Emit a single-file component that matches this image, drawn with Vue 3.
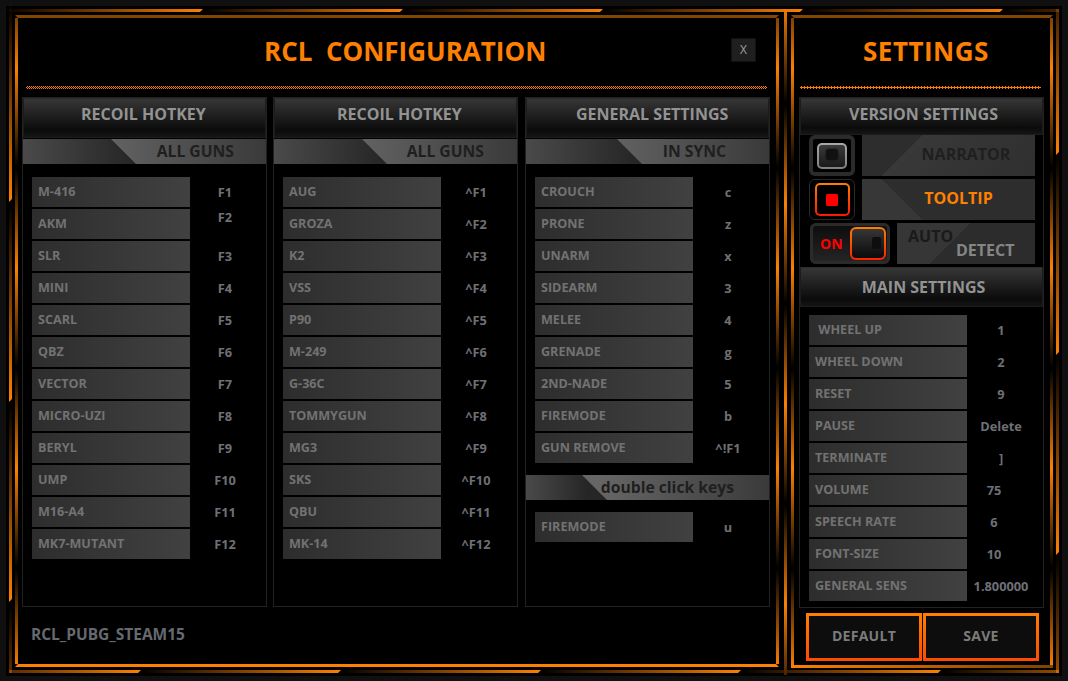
<script setup>
const columns = [
  {
    cls: 'c1', title: 'RECOIL HOTKEY', sub: 'ALL GUNS',
    rows: [['M-416','F1'],['AKM','F2','up'],['SLR','F3'],['MINI','F4'],['SCARL','F5'],['QBZ','F6'],['VECTOR','F7'],['MICRO-UZI','F8'],['BERYL','F9'],['UMP','F10'],['M16-A4','F11'],['MK7-MUTANT','F12']],
  },
  {
    cls: 'c2', title: 'RECOIL HOTKEY', sub: 'ALL GUNS',
    rows: [['AUG','^F1'],['GROZA','^F2'],['K2','^F3'],['VSS','^F4'],['P90','^F5'],['M-249','^F6'],['G-36C','^F7'],['TOMMYGUN','^F8'],['MG3','^F9'],['SKS','^F10'],['QBU','^F11'],['MK-14','^F12']],
  },
  {
    cls: 'c3', title: 'GENERAL SETTINGS', sub: 'IN SYNC',
    rows: [['CROUCH','c'],['PRONE','z'],['UNARM','x'],['SIDEARM','3'],['MELEE','4'],['GRENADE','g'],['2ND-NADE','5'],['FIREMODE','b'],['GUN REMOVE','^!F1']],
    extra: { sub: 'double click keys', rows: [['FIREMODE','u']] },
  },
]
const mainRows = [[' WHEEL UP','1'],['WHEEL DOWN','2'],['RESET','9'],['PAUSE','Delete'],['TERMINATE',']'],['VOLUME','75','left'],['SPEECH RATE','6','left'],['FONT-SIZE','10','left'],['GENERAL SENS','1.800000']]
const mainTitle = 'RCL\u00a0\u00a0CONFIGURATION'
const topSegs = 6
const leftSegs = 4
const bottomSegs = 6
const rightSegs = 4
</script>

<template>
  <div class="page">
    <div class="stage">
      <section class="frame main">
        <header class="head">
          <h1 class="title rcl">{{ mainTitle }}</h1>
          <button class="close">X</button>
        </header>
        <div class="dots"></div>
        <div class="cols">
          <div v-for="col in columns" :key="col.cls + col.title" class="panel" :class="col.cls">
            <div class="bar">{{ col.title }}</div>
            <div class="sub"><span>{{ col.sub }}</span></div>
            <div class="rows">
              <div v-for="r in col.rows" :key="r[0]" class="row">
                <div class="label">{{ r[0] }}</div>
                <div class="val" :class="r[2]">{{ r[1] }}</div>
              </div>
            </div>
            <template v-if="col.extra">
              <div class="sub dbl"><span>{{ col.extra.sub }}</span></div>
              <div class="rows tight">
                <div v-for="r in col.extra.rows" :key="r[0]" class="row">
                  <div class="label">{{ r[0] }}</div>
                  <div class="val">{{ r[1] }}</div>
                </div>
              </div>
            </template>
          </div>
        </div>
        <div class="foot">RCL_PUBG_STEAM15</div>
      </section>

      <section class="frame side">
        <i class="edge"></i>
        <header class="head">
          <h1 class="title set">SETTINGS</h1>
        </header>
        <div class="dots sparse"></div>
        <div class="panel sp">
          <div class="bar short">VERSION SETTINGS</div>
          <div class="opt">
            <div class="chk off"><span class="box"><b></b></span></div>
            <div class="blk narrator">NARRATOR</div>
          </div>
          <div class="opt">
            <div class="chk on"><span class="box"><b></b></span></div>
            <div class="blk tooltip">TOOLTIP</div>
          </div>
          <div class="opt">
            <div class="toggle">
              <span class="on-txt">ON</span>
              <span class="knob"><b></b></span>
            </div>
            <div class="blk auto">
              <span class="a1">AUTO</span>
              <span class="a2">DETECT</span>
            </div>
          </div>
          <div class="bar short mainbar">MAIN SETTINGS</div>
          <div class="rows srows">
            <div v-for="r in mainRows" :key="r[0]" class="row">
              <div class="label">{{ r[0] }}</div>
              <div class="val sval" :class="r[2]">{{ r[1] }}</div>
            </div>
          </div>
        </div>
        <div class="btns">
          <button class="btn">DEFAULT</button>
          <button class="btn">SAVE</button>
        </div>
      </section>
    </div>

    <div class="strip top"><i v-for="n in topSegs" :key="n"></i></div>
    <div class="strip left"><i v-for="n in leftSegs" :key="n"></i></div>
    <div class="strip bottom"><i v-for="n in bottomSegs" :key="n"></i></div>
    <div class="strip right"><i v-for="n in rightSegs" :key="n"></i></div>
    <div class="center-line"></div>
  </div>
</template>

<style scoped>
.page {
  position: relative;
  width: 1068px;
  height: 681px;
  padding: 6px 6px 5px;
  box-sizing: border-box;
  overflow: hidden;
  background: #101010;
  font-family: "Open Sans", "Noto Sans", sans-serif;
}
.stage {
  display: flex;
  height: 670px;
  padding: 9px 0 0 9px;
  box-sizing: border-box;
  background: #000;
}
.frame {
  position: relative;
  box-sizing: border-box;
  border: 3px solid transparent;
  border-top-color: #844500;
  border-bottom-color: #ff8000;
}
.frame::before,
.frame::after {
  content: "";
  position: absolute;
  top: 0;
  bottom: 0;
  width: 3px;
  background: repeating-linear-gradient(180deg, #000 -50px, #ff8000 50px, #000 150px);
}
.frame::before { left: -3px; }
.frame::after { right: -3px; }
.main { width: 764px; height: 652px; }
.side { width: 262px; height: 653px; margin-left: 12px; border-bottom-color: transparent; }
.edge {
  position: absolute;
  left: -3px;
  right: -3px;
  bottom: -3px;
  height: 3px;
  background: linear-gradient(90deg, #ff8000, #7d4200);
}
.head {
  display: flex;
  align-items: center;
  height: 68px;
  box-sizing: border-box;
}
.title {
  margin: 0 0 2px;
  font-size: 26px;
  line-height: 34px;
  font-weight: 700;
  color: #ff8000;
  white-space: pre;
}
.rcl { margin-left: 246px; }
.set { margin-left: 69px; letter-spacing: .5px; }
.close {
  width: 25px;
  height: 24px;
  margin: 0 20px 5px auto;
  padding: 0;
  border: 1px solid #111;
  background: #1f1f1f;
  color: #a0a0a0;
  font: 400 12px "Open Sans", sans-serif;
}
.dots {
  width: 741px;
  height: 3px;
  margin-left: 8px;
  background: repeating-conic-gradient(#ff8000 0 25%, #000 0 50%) 0 0 / 2px 2px;
}
.dots.sparse {
  width: 241px;
  margin-left: 6px;
  background: radial-gradient(circle, #ff8000 1px, transparent 1.3px) 0 0 / 3px 3px;
}
.cols {
  display: flex;
  gap: 6px;
  margin: 8px 0 0 4px;
}
.panel {
  width: 245px;
  height: 510px;
  box-sizing: border-box;
  border: 1px solid #222;
  flex: none;
}
.c3 { margin-left: 1px; }
.bar {
  height: 40px;
  box-sizing: border-box;
  border: 1px solid #1c1c1c;
  border-top-color: #2c2c2c;
  background: linear-gradient(#363636, #0b0b0b 82%, #151515);
  color: #939393;
  font-size: 16px;
  font-weight: 700;
  line-height: 31px;
  white-space: nowrap;
}
.c1 .bar { padding-left: 57px; }
.c2 .bar { padding-left: 62px; }
.c3 .bar { padding-left: 49px; }
.sub {
  position: relative;
  height: 25px;
  margin-top: 1px;
  background: linear-gradient(90deg, #4a4a4a, #262626 45%);
  color: #1f1f1f;
  font-size: 15.7px;
  font-weight: 700;
  line-height: 25px;
  text-align: right;
}
.sub::before {
  content: "";
  position: absolute;
  inset: 0;
  background: linear-gradient(90deg, #666 30%, #3a3a3a);
  clip-path: polygon(88px 0, 100% 0, 100% 100%, 113px 100%);
}
.c3 .sub::before { clip-path: polygon(91px 0, 100% 0, 100% 100%, 116px 100%); }
.sub span { position: relative; }
.c1 .sub { padding-right: 32px; }
.c2 .sub { padding-right: 33px; }
.c3 .sub { padding-right: 43px; }
.c3 .sub.dbl {
  margin-top: 12px;
  padding-right: 35px;
  background: linear-gradient(90deg, #4a4a4a, #262626 25%);
}
.c3 .sub.dbl::before {
  background: linear-gradient(90deg, #666 30%, #3a3a3a);
  clip-path: polygon(56px 0, 100% 0, 100% 100%, 81px 100%);
}
.rows {
  display: flex;
  flex-direction: column;
  gap: 2px;
  margin: 13px 0 0 9px;
}
.rows.tight { margin-top: 12px; }
.row { display: flex; align-items: center; height: 30px; }
.label {
  width: 158px;
  height: 30px;
  padding-left: 6px;
  box-sizing: border-box;
  background: linear-gradient(90deg, #2d2d2d, #414141);
  color: #727272;
  font-size: 12.6px;
  font-weight: 700;
  line-height: 30px;
  white-space: pre;
}
.val {
  width: 70px;
  color: #6e7076;
  font-size: 12.8px;
  font-weight: 700;
  line-height: 18px;
  text-align: center;
}
.val.up { margin-bottom: 14px; }
.sval { width: 68px; }
.sval.left { padding-right: 14px; box-sizing: border-box; }
.sp { height: 511px; margin: 8px 0 0 5px; }
.bar.short { height: 37px; line-height: 30px; text-align: center; padding-left: 4px; }
.opt {
  display: flex;
  gap: 7px;
  height: 41px;
  margin: 0 8px 3px 9px;
}
.chk {
  width: 46px;
  height: 41px;
  box-sizing: border-box;
  border-radius: 6px;
  display: flex;
  align-items: center;
  justify-content: center;
  flex: none;
  background: #000;
}
.chk.off { box-shadow: inset 0 0 0 4px #2b2b2b; }
.chk.on { border: 1px solid #2a2a2a; }
.box {
  box-sizing: border-box;
  border: 2px solid transparent;
  border-radius: 5px;
  display: flex;
  align-items: center;
  justify-content: center;
}
.off .box {
  width: 30px;
  height: 26px;
  background: linear-gradient(#3a3a3a, #1a1a1a) padding-box, linear-gradient(#a8a8a8, #808080) border-box;
}
.off .box b {
  width: 12px;
  height: 11px;
  margin-bottom: 2px;
  border-radius: 3px;
  background: #111;
  box-shadow: 0 0 2px #111;
}
.on .box {
  width: 35px;
  height: 33px;
  background: linear-gradient(#000, #000) padding-box, linear-gradient(#ff8000, #ff1500) border-box;
}
.on .box b { width: 12px; height: 12px; background: #ff0000; border-radius: 1px; }
.blk {
  flex: 1;
  text-align: center;
  font-size: 16px;
  font-weight: 700;
  line-height: 38px;
  white-space: nowrap;
}
.narrator {
  padding-left: 35px;
  background: linear-gradient(135deg, #2d2d2d 43px, #383838 43px, #2f2f2f);
  color: #1f1f1f;
}
.tooltip {
  padding-left: 20px;
  background: linear-gradient(45deg, #373737 43px, #2d2d2d 43px);
  color: #ff8000;
}
.toggle {
  width: 80px;
  height: 41px;
  box-sizing: border-box;
  padding: 4px 4px 4px 10px;
  margin-left: 1px;
  border-radius: 6px;
  background: linear-gradient(#0c0c0c, #262626);
  box-shadow: inset 0 0 0 3px #2b2b2b;
  display: flex;
  align-items: center;
  justify-content: space-between;
  flex: none;
}
.on-txt { color: #f00; font-size: 14px; font-weight: 700; }
.knob {
  width: 36px;
  height: 33px;
  box-sizing: border-box;
  border: 2px solid transparent;
  border-radius: 6px;
  background: linear-gradient(#363636, #0a0a0a) padding-box, linear-gradient(#ff8000, #ff2000) border-box;
  display: flex;
  align-items: flex-start;
  justify-content: flex-end;
  padding: 8px 3px 0 0;
}
.knob b { width: 9px; height: 12px; border-radius: 2px; background: #0e0e0e; }
.auto {
  margin-left: 0;
  background: linear-gradient(135deg, #363636 52px, #2c2c2c 52px);
  line-height: 18px;
  display: flex;
  flex-direction: column;
  padding: 4px 0 0 11px;
  box-sizing: border-box;
}
.a1 { color: #1a1a1a; align-self: flex-start; }
.a2 { color: #858585; align-self: flex-start; margin: -4px 0 0 48px; }
.bar.mainbar { margin-top: 1px; height: 40px; line-height: 38px; }
.rows.srows { margin-top: 8px; }
.btns { display: flex; gap: 1px; margin: 5px 0 0 12px; }
.btn {
  width: 116px;
  height: 48px;
  padding: 0 0 3px;
  border: 3px solid transparent;
  background: linear-gradient(#0d0d0d, #0d0d0d) padding-box, linear-gradient(#ff8000, #ff4a00) border-box;
  color: #7c7c7c;
  font: 700 14px "Open Sans", sans-serif;
  letter-spacing: .3px;
}
.foot {
  margin: 17px 0 0 13px;
  color: #666a70;
  font-size: 15.5px;
  font-weight: 700;
  line-height: 20px;
}
.strip { position: absolute; display: flex; overflow: hidden; }
.strip i { display: block; flex: none; }
.strip.top { left: 3px; right: 9px; top: 9px; height: 3px; }
.strip.bottom { left: 9px; right: 9px; top: 670px; height: 3px; }
.strip.left { left: 9px; width: 3px; top: 2px; height: 671px; flex-direction: column; }
.strip.right { left: 1056px; width: 3px; top: 9px; height: 664px; flex-direction: column; }
.strip.top i, .strip.bottom i {
  width: 200px;
  height: 3px;
  background: linear-gradient(90deg, transparent, #ff8000);
  clip-path: polygon(0 0, 100% 0, calc(100% - 3px) 100%, 0 100%);
}
.strip.left i, .strip.right i {
  width: 3px;
  height: 200px;
  background: linear-gradient(180deg, transparent, #ff8000);
  clip-path: polygon(0 0, 100% 0, 100% calc(100% - 3px), 0 100%);
}
.strip.bottom i:first-child { margin-left: -68px; }
.strip.right i:first-child { margin-top: -54px; }
.center-line {
  position: absolute;
  left: 784px;
  top: 9px;
  width: 3px;
  height: 666px;
  background: repeating-linear-gradient(180deg, #ff8000 -5px, #000 95px, #ff8000 195px);
}
</style>
